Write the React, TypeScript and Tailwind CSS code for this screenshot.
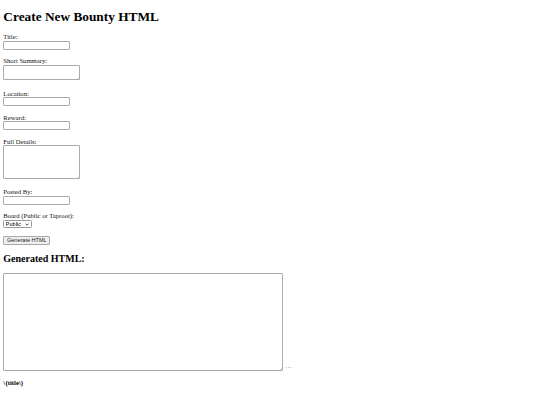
import React from "react";

const serif = "font-['Liberation_Serif','Times_New_Roman',serif]";
const sans = "font-['Liberation_Sans',Arial,sans-serif]";

function Label({ text }: { text: string }) {
  return <div className={`${serif} text-[6.67px] leading-[7.67px] text-[#111] whitespace-nowrap`}>{text}</div>;
}

function Gap() {
  return <div className="h-[7.67px]" />;
}

function TextInput() {
  return (
    <div className="h-[8.75px] flex items-start">
      <input
        type="text"
        className="box-border block w-[66.5px] h-[8.75px] border border-[#ababab] rounded-[1px] bg-white outline-none"
      />
    </div>
  );
}

function Grip() {
  return (
    <svg className="absolute right-[0.5px] bottom-[0.5px] block" width="4" height="4" viewBox="0 0 4 4">
      <line x1="4" y1="0.8" x2="0.8" y2="4" stroke="#a0a0a0" strokeWidth="0.5" />
      <line x1="4" y1="2.4" x2="2.4" y2="4" stroke="#a0a0a0" strokeWidth="0.5" />
    </svg>
  );
}

function Area({ w, h }: { w: string; h: string }) {
  return (
    <div className={`relative ${w} ${h}`}>
      <textarea className={`box-border block ${w} ${h} border border-[#ababab] rounded-[1px] bg-white resize-none outline-none`} />
      <Grip />
    </div>
  );
}

export default function App() {
  return (
    <div className="w-[540px] h-[405px] bg-white overflow-hidden px-[3.33px] pt-[8.93px] text-black">
      <h1 className={`${serif} font-bold text-[13.33px] leading-[15.33px] whitespace-nowrap`}>Create New Bounty HTML</h1>
      <div className="h-[8.93px]" />
      <form className="flex flex-col" onSubmit={(e) => e.preventDefault()}>
        <Label text="Title:" />
        <TextInput />
        <Gap />
        <Label text="Short Summary:" />
        <div className="h-[17px] flex items-start">
          <Area w="w-[77px]" h="h-[15.4px]" />
        </div>
        <Gap />
        <Label text="Location:" />
        <TextInput />
        <Gap />
        <Label text="Reward:" />
        <TextInput />
        <Gap />
        <Label text="Full Details:" />
        <div className="h-[35.35px] flex items-start">
          <Area w="w-[77px]" h="h-[33.75px]" />
        </div>
        <Gap />
        <Label text="Posted By:" />
        <TextInput />
        <Gap />
        <Label text="Board (Public or Taproot):" />
        <div className="h-[8.3px] flex items-start">
          <div className="relative flex w-[29px] h-[8px]">
            <select
              className={`${sans} box-border block appearance-none w-[29px] h-[8px] min-h-0 border border-[#9a9a9a] rounded-[1.5px] bg-white text-[5.56px] leading-[6px] pl-[1.5px] pr-[8px] py-0 outline-none text-black`}
              defaultValue="Public"
            >
              <option value="Public">Public</option>
              <option value="Taproot">Taproot</option>
            </select>
            <svg className="absolute right-[3px] top-[2.7px] block pointer-events-none" width="4" height="3" viewBox="0 0 4 3">
              <polyline points="0.5,0.6 2,2.2 3.5,0.6" fill="none" stroke="#222" strokeWidth="0.8" />
            </svg>
          </div>
        </div>
        <Gap />
        <div className="h-[8.75px] flex items-start">
          <button
            type="button"
            className={`${sans} box-border w-[47px] h-[8.75px] border border-[#a8a8a8] rounded-[1px] bg-[#efefef] text-[5.56px] leading-[6px] text-[#222] whitespace-nowrap flex items-center justify-center`}
          >
            Generate HTML
          </button>
        </div>
      </form>
      <div className="h-[8.3px]" />
      <h2 className={`${serif} font-bold text-[10px] leading-[11.5px] whitespace-nowrap`}>Generated HTML:</h2>
      <div className="h-[8.3px]" />
      <div className="flex items-end h-[99.6px]">
        <div className="self-start flex">
          <Area w="w-[280px]" h="h-[98px]" />
        </div>
        <span className={`${sans} text-[6.67px] leading-[6px] text-[#777] ml-[2px] mb-[4px] tracking-[0.2px]`}>...</span>
      </div>
      <div className="h-[6.67px]" />
      <div className={`${serif} font-bold text-[6.67px] leading-[7.67px] whitespace-nowrap`}>{"\\{title\\}"}</div>
    </div>
  );
}
